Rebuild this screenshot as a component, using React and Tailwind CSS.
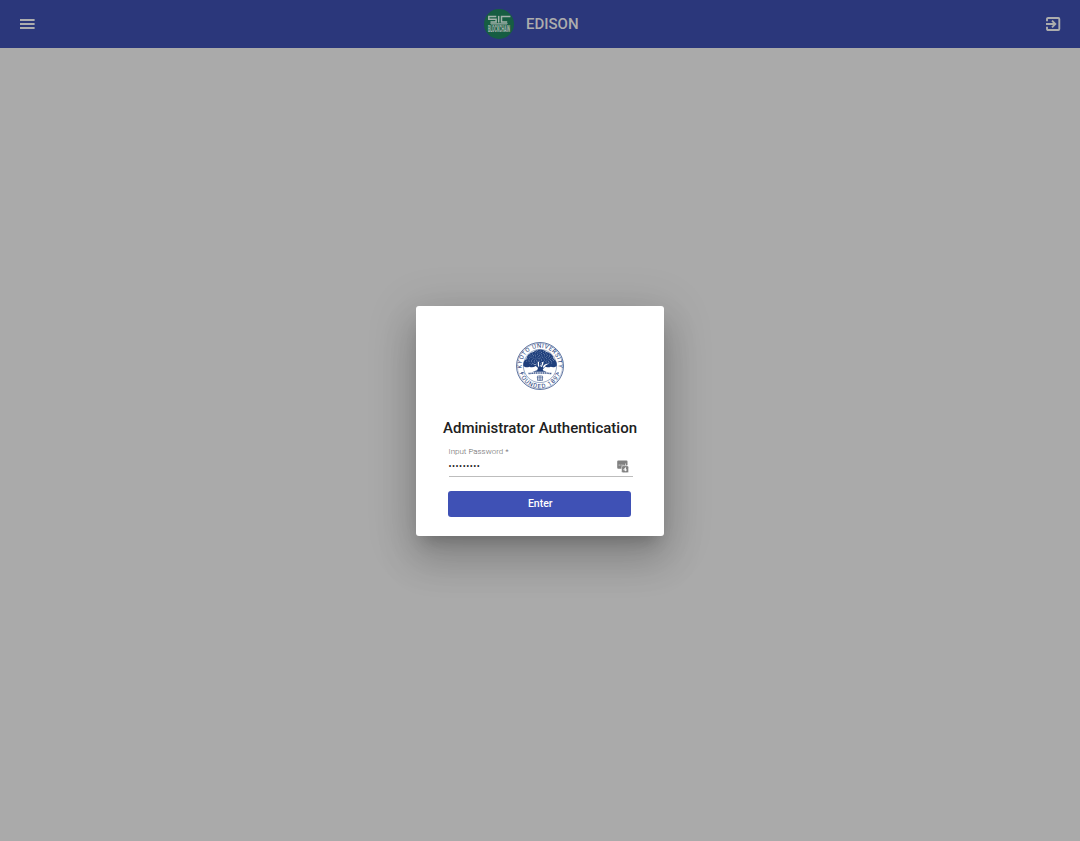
const MenuIcon = () => (
  <svg viewBox="0 0 15 10" className="h-[10px] w-[15px]" fill="currentColor">
    <path d="M0 0h14.600v2H0zM0 4h14.600v2H0zM0 8h14.600v2H0z" />
  </svg>
);

const ExitIcon = () => (
  <svg viewBox="0 0 15 14" className="h-[14px] w-[15px]" fill="none" stroke="currentColor" strokeWidth="1.900">
    <path d="M1 4.300V2Q1 1 2.100 1H12.300Q13.300 1 13.300 2V12Q13.300 13 12.300 13H2.100Q1 13 1 12V9.700" />
    <path d="M0 7h9M6 3.700L9.300 7 6 10.300" />
  </svg>
);

const SicLogo = () => (
  <svg viewBox="0 0 30 30" className="size-[30px]">
    <circle cx="15" cy="15" r="15" fill="#165d42" />
    <g fill="none" stroke="#a3b2ab" strokeWidth="1.500">
      <path d="M12.300 7.600H4.800v2.700h7.300v2.600H6.500" />
      <path d="M14.700 6.900v6.700" />
      <path d="M26.400 7.600h-8.900v5.300h5.700" />
    </g>
    <path d="M6 14.200h18l-1.200 1.300H7.200z" fill="#a3b2ab" />
    <text
      transform="translate(15 23.200) scale(0.420 1)"
      textAnchor="middle"
      fill="#a3b2ab"
      className="font-['Roboto',sans-serif] text-[8.500px] font-black"
    >
      BLOCKCHAIN
    </text>
  </svg>
);

const FOLIAGE = Array.from({ length: 110 }, (_, i) => {
  const angle = i * 2.4;
  const r = Math.sqrt(i / 110);
  return { x: 24 + Math.cos(angle) * r * 14.5, y: 16.2 + Math.sin(angle) * r * 7.5 };
});

const UniversitySeal = () => (
  <svg viewBox="0 0 48 48" className="size-12">
    <defs>
      <path id="seal-top" d="M7.800 32.800A18.400 18.400 0 1 1 40.200 32.800" />
      <path id="seal-bottom" d="M2.800 25A21.200 21.200 0 0 0 45.200 25" />
    </defs>
    <g fill="none" stroke="#3b568c">
      <circle cx="24" cy="24" r="23.500" strokeWidth="0.800" />
      <circle cx="24" cy="24" r="22.500" strokeWidth="0.300" />
      <circle cx="24" cy="24" r="16.600" strokeWidth="0.500" />
    </g>
    <g fill="#1c3a78" textAnchor="middle" className="font-['Roboto',sans-serif]">
      <text className="text-[6px] tracking-[0.550px]">
        <textPath href="#seal-top" startOffset="50%">KYOTO UNIVERSITY</textPath>
      </text>
      <text className="text-[6px] tracking-[1px]">
        <textPath href="#seal-bottom" startOffset="50%">FOUNDED 1897</textPath>
      </text>
    </g>
    <g transform="translate(24 17) scale(1.060) translate(-24 -17)">
      <path
        d="M8.300 23.500c-.5-3 1-5.500 3-7 .5-3 3.500-5.500 6.500-6 3-3.200 9.500-3.200 12.500 0 3.500.5 6 3 6.500 6 2.500 2 3.500 4.500 2.900 7-1.500 1.500-4 1.500-5.500.8-2 1-4.500.6-6-.6-2 .8-6 .8-8.200-.2-2 1.300-4 1.500-6 .7-2 .9-4.200.6-5.700-.7z"
        fill="#1f3f7c"
      />
      <g fill="#b4c2d9">
        {FOLIAGE.map((leaf, i) => (
          <circle key={i} cx={leaf.x} cy={leaf.y} r="0.380" />
        ))}
      </g>
    </g>
    <path d="M15.500 21.200l4.500 1.300 1.800 2.300v-5h1.200v4.500l1.200-1.800 1 2 1-4.500h1.300l-.8 4.500 2-2 4.500-1.300-3.500 2.400-2.200 2v1.800l3.500 1.400h-13l3.800-1.500.3-2.300-2.600-1.900z" fill="#fff" />
    <path d="M18.300 22.400l3.500 1.200 1.200 2 .6-4.600.8 3.300 1.400 1 1.200-2.800.2 3.600 3.200-2.400-3.600 3.500.3 1.300 3.600 1.200H16.500l4.700-1.400.8-2.200z" fill="#1f3f7c" />
    <path d="M12.500 31.600q11.500-1.400 23 0" fill="none" stroke="#3b568c" strokeWidth="1.500" strokeDasharray="1.300 .5" />
    <path d="M21.500 34h5v4.500h-5zM20.800 35.300h6.400M21 37h6M24 33.500v5.500" fill="none" stroke="#3b568c" strokeWidth="0.600" />
    <g fill="#24437f">
      <circle cx="6" cy="31" r="0.800" />
      <circle cx="42" cy="31" r="0.800" />
    </g>
  </svg>
);

const PasswordManagerIcon = () => (
  <svg viewBox="0 0 12 13" className="h-[13px] w-3">
    <path d="M1.200.5h8.300a1 1 0 0 1 1 1V5L5.500 8.800H1.200a1 1 0 0 1-1-1V1.500a1 1 0 0 1 1-1z" fill="#808080" />
    <rect x="4.600" y="5.700" width="7" height="7" rx="1.500" fill="#808080" stroke="#fff" strokeWidth="0.500" />
    <g fill="#eee">
      <circle cx="2.200" cy="5" r="0.600" />
      <circle cx="4.100" cy="5" r="0.600" />
      <circle cx="6" cy="5" r="0.600" />
      <path d="M8.200 3.600h.7v2.100h-.7z" />
    </g>
    <path d="M8.500 7.500v3.700M8.500 7.700L6.700 10h3.200" fill="none" stroke="#fff" strokeWidth="0.900" />
  </svg>
);

function Toolbar() {
  return (
    <header className="grid h-12 grid-cols-3 items-center bg-[#2b377b] text-[#adadad]">
      <button className="ml-5 justify-self-start" aria-label="Menu">
        <MenuIcon />
      </button>
      <div className="flex items-center justify-center gap-3 pr-[17px]">
        <SicLogo />
        <span className="w-[53px] text-[15px] leading-6 font-medium whitespace-nowrap">EDISON</span>
      </div>
      <button className="mr-[19px] justify-self-end" aria-label="Sign out">
        <ExitIcon />
      </button>
    </header>
  );
}

function AuthDialog() {
  return (
    <form className="flex h-[229.500px] w-[248px] flex-col items-center rounded-[3px] bg-white pt-9 shadow-[0_11px_15px_-7px_rgba(0,0,0,0.2),0_24px_38px_3px_rgba(0,0,0,0.14),0_9px_46px_8px_rgba(0,0,0,0.12)]">
      <UniversitySeal />
      <h1 className="mt-7 text-[15px] leading-5 font-medium whitespace-nowrap text-[#212121]">
        Administrator Authentication
      </h1>
      <div className="mt-2 ml-px flex h-[31px] w-[184px] flex-col border-b border-[#bdbdbd]">
        <label className="h-[10px] text-[8px] leading-[12px] font-light text-[#666]">Input Password *</label>
        <div className="flex h-5 items-center justify-between pr-1">
          <span className="text-[9px] leading-5 tracking-[0.500px] text-[#222]">•••••••••</span>
          <PasswordManagerIcon />
        </div>
      </div>
      <button
        type="button"
        className="mt-[13.500px] mr-px h-[26.500px] w-[183px] rounded-[3px] bg-[#3f51b5] pt-px pl-[1.500px] text-[10.500px] font-medium text-white"
      >
        Enter
      </button>
    </form>
  );
}

export default function App() {
  return (
    <div className="flex h-screen flex-col bg-[#aaa] font-['Roboto',sans-serif]">
      <Toolbar />
      <main className="flex flex-1 items-start justify-center pt-[258px]">
        <AuthDialog />
      </main>
    </div>
  );
}
